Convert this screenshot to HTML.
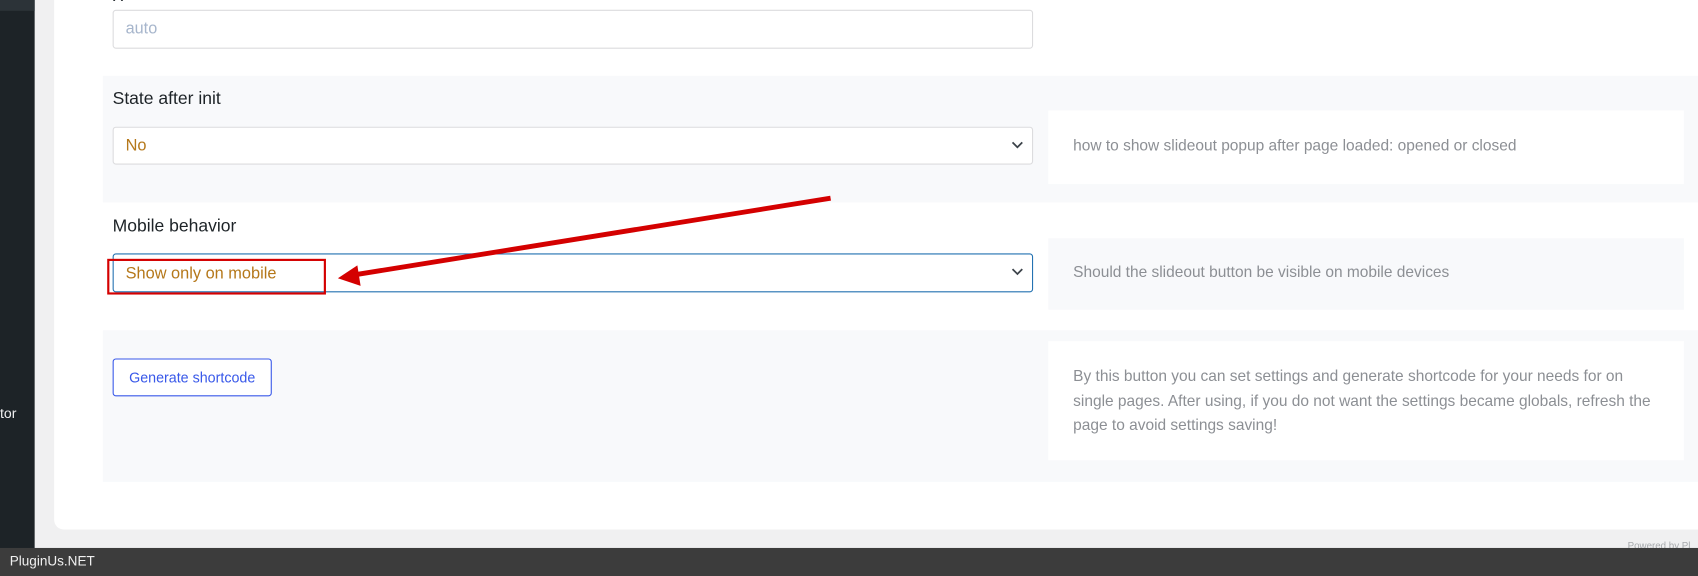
<!DOCTYPE html>
<html><head><meta charset="utf-8"><style>
html,body{margin:0;padding:0;width:1698px;height:576px;overflow:hidden;background:#f0f0f1;font-family:"Liberation Sans",sans-serif}
#w{position:absolute;left:0;top:0;width:1568px;height:532px;transform:scale(1.08291);transform-origin:0 0;background:#f0f0f1;overflow:hidden}
.a{position:absolute}
.sel{position:absolute;left:104px;width:850px;background:#fff;border:1px solid #dcdcde;border-radius:3px;box-sizing:border-box;font-size:15.1px;color:#b5781a;padding-left:11px}
.chev{position:absolute;right:8px;top:50%;margin-top:-5px}
.desc{position:absolute;left:968px;width:587px;box-sizing:border-box;padding-left:23px;font-size:14.3px;color:#8c8f94}
</style></head><body><div id="w">
<div class="a" style="left:0;top:0;width:32px;height:532px;background:#1d2327"></div>
<div class="a" style="left:0;top:0;width:32px;height:10px;background:#2c3338"></div>
<div class="a" style="left:0;top:374px;color:#f0f0f1;font-size:13px">tor</div>
<div class="a" style="left:50px;top:-20px;width:1540px;height:509px;background:#fff;border-radius:0 0 0 9px"></div>
<div class="a" style="left:104px;top:-12px;font-size:15px;color:#1d2327">X</div>
<div class="a" style="left:104px;top:9px;width:850px;height:36px;border:1px solid #dcdcde;border-radius:3px;box-sizing:border-box;color:#a7b6cc;font-size:15px;padding:8px 0 0 11px">auto</div>

<div class="a" style="left:95px;top:70px;width:1480px;height:117px;background:#f8f9fb"></div>
<div class="a" style="left:104px;top:82px;font-size:16.2px;color:#1d2327">State after init</div>
<div class="sel" style="top:117px;height:35px;padding-top:8px">No<svg class="chev" width="11" height="8" viewBox="0 0 11 8"><path d="M1 1.5l4.5 4.5 4.5-4.5" fill="none" stroke="#3c434a" stroke-width="1.6"/></svg></div>
<div class="desc" style="top:102px;height:68px;background:#fff;padding-top:25px">how to show slideout popup after page loaded: opened or closed</div>

<div class="a" style="left:104px;top:200px;font-size:16.2px;color:#1d2327">Mobile behavior</div>
<div class="sel" style="top:234px;height:36px;border:1.5px solid #2271b1;padding-top:9px">Show only on mobile<svg class="chev" width="11" height="8" viewBox="0 0 11 8"><path d="M1 1.5l4.5 4.5 4.5-4.5" fill="none" stroke="#3c434a" stroke-width="1.6"/></svg></div>
<div class="desc" style="top:220px;height:66px;background:#f8f9fb;padding-top:24px">Should the slideout button be visible on mobile devices</div>

<div class="a" style="left:95px;top:305px;width:1480px;height:140px;background:#f8f9fb"></div>
<div class="a" style="left:104px;top:331px;width:147px;height:35px;border:1px solid #3858e9;border-radius:3px;box-sizing:border-box;background:#fff;color:#3858e9;font-size:13.2px;text-align:center;line-height:33px">Generate shortcode</div>
<div class="desc" style="top:315px;height:110px;background:#fff;padding-top:22px;line-height:22.5px;padding-right:24px">By this button you can set settings and generate shortcode for your needs for on single pages. After using, if you do not want the settings became globals, refresh the page to avoid settings saving!</div>

<div class="a" style="left:99px;top:239px;width:202px;height:33px;border:2px solid #d40000;box-sizing:border-box"></div>
<svg class="a" style="left:0;top:0" width="1568" height="532"><line x1="767" y1="183" x2="326" y2="254" stroke="#d40000" stroke-width="4.5"/><path d="M312 257 L330 245 L333 264 Z" fill="#d40000"/></svg>

<div class="a" style="left:1503px;top:499px;font-size:9px;color:#a7aaad">Powered by Pl</div>
<div class="a" style="left:0;top:506px;width:1568px;height:26px;background:#3c3c3c"></div>
<div class="a" style="left:9px;top:511px;font-size:12.5px;color:#f0f0f0">PluginUs.NET</div>
</div></body></html>
